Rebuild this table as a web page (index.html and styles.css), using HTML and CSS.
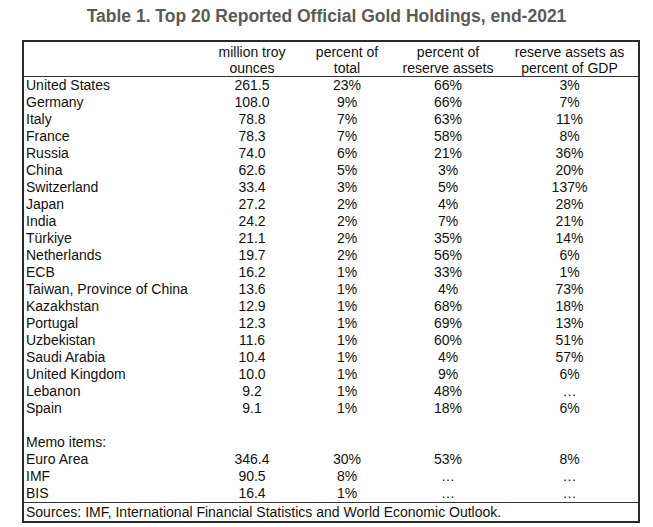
FILE: index.html
```html
<!DOCTYPE html>
<html lang="en">
<head>
<meta charset="utf-8">
<title>Top 20 Reported Official Gold Holdings</title>
<link rel="stylesheet" href="styles.css">
</head>
<body>
<h1 class="title">Table 1. Top 20 Reported Official Gold Holdings, end-2021</h1>
<div class="frame">
<table class="gold">
<colgroup>
<col class="c-name"><col class="c-oz"><col class="c-tot"><col class="c-res"><col class="c-gdp">
</colgroup>
<thead>
<tr>
<th></th>
<th>million troy<br>ounces</th>
<th>percent of<br>total</th>
<th>percent of<br>reserve assets</th>
<th>reserve assets as<br>percent of GDP</th>
</tr>
</thead>
<tbody>
<tr><td>United States</td><td>261.5</td><td>23%</td><td>66%</td><td>3%</td></tr>
<tr><td>Germany</td><td>108.0</td><td>9%</td><td>66%</td><td>7%</td></tr>
<tr><td>Italy</td><td>78.8</td><td>7%</td><td>63%</td><td>11%</td></tr>
<tr><td>France</td><td>78.3</td><td>7%</td><td>58%</td><td>8%</td></tr>
<tr><td>Russia</td><td>74.0</td><td>6%</td><td>21%</td><td>36%</td></tr>
<tr><td>China</td><td>62.6</td><td>5%</td><td>3%</td><td>20%</td></tr>
<tr><td>Switzerland</td><td>33.4</td><td>3%</td><td>5%</td><td>137%</td></tr>
<tr><td>Japan</td><td>27.2</td><td>2%</td><td>4%</td><td>28%</td></tr>
<tr><td>India</td><td>24.2</td><td>2%</td><td>7%</td><td>21%</td></tr>
<tr><td>Türkiye</td><td>21.1</td><td>2%</td><td>35%</td><td>14%</td></tr>
<tr><td>Netherlands</td><td>19.7</td><td>2%</td><td>56%</td><td>6%</td></tr>
<tr><td>ECB</td><td>16.2</td><td>1%</td><td>33%</td><td>1%</td></tr>
<tr><td>Taiwan, Province of China</td><td>13.6</td><td>1%</td><td>4%</td><td>73%</td></tr>
<tr><td>Kazakhstan</td><td>12.9</td><td>1%</td><td>68%</td><td>18%</td></tr>
<tr><td>Portugal</td><td>12.3</td><td>1%</td><td>69%</td><td>13%</td></tr>
<tr><td>Uzbekistan</td><td>11.6</td><td>1%</td><td>60%</td><td>51%</td></tr>
<tr><td>Saudi Arabia</td><td>10.4</td><td>1%</td><td>4%</td><td>57%</td></tr>
<tr><td>United Kingdom</td><td>10.0</td><td>1%</td><td>9%</td><td>6%</td></tr>
<tr><td>Lebanon</td><td>9.2</td><td>1%</td><td>48%</td><td>…</td></tr>
<tr><td>Spain</td><td>9.1</td><td>1%</td><td>18%</td><td>6%</td></tr>
<tr><td></td><td></td><td></td><td></td><td></td></tr>
<tr><td>Memo items:</td><td></td><td></td><td></td><td></td></tr>
<tr><td>Euro Area</td><td>346.4</td><td>30%</td><td>53%</td><td>8%</td></tr>
<tr><td>IMF</td><td>90.5</td><td>8%</td><td>…</td><td>…</td></tr>
<tr><td>BIS</td><td>16.4</td><td>1%</td><td>…</td><td>…</td></tr>
</tbody>
<tfoot>
<tr><td colspan="5" class="sources">Sources: IMF, International Financial Statistics and World Economic Outlook.</td></tr>
</tfoot>
</table>
</div>
</body>
</html>
```
FILE: styles.css
```css
html, body {
  margin: 0;
  padding: 0;
  background: #ffffff;
}
body {
  font-family: "Liberation Sans", Arial, sans-serif;
  color: #111;
}
.title {
  margin: 0;
  height: 40px;
  box-sizing: border-box;
  padding-top: 6px;
  line-height: 20px;
  font-size: 17.5px;
  font-weight: bold;
  color: #5a5a5a;
  text-align: center;
}
.frame {
  margin-left: 22px;
  width: 618px;
  box-sizing: border-box;
  border: 2px solid #2a2a2a;
}
.gold {
  width: 614px;
  table-layout: fixed;
  border-collapse: collapse;
  border-spacing: 0;
  font-size: 14px;
}
.c-name { width: 181px; }
.c-oz { width: 94px; }
.c-tot { width: 96px; }
.c-res { width: 106px; }
.c-gdp { width: 137px; }
.gold th {
  font-weight: normal;
  line-height: 16px;
  height: 34px;
  box-sizing: border-box;
  padding: 2px 0 0 0;
  vertical-align: top;
  text-align: center;
  border-bottom: 1px solid #333;
  white-space: nowrap;
}
.gold td {
  height: 17px;
  line-height: 17px;
  padding: 0;
  text-align: center;
  white-space: nowrap;
  vertical-align: middle;
}
.gold td:first-child {
  text-align: left;
  padding-left: 2px;
}
.gold .sources {
  text-align: left;
  padding-left: 2px;
  border-top: 1px solid #333;
  height: 18px;
  line-height: 18px;
}
```
